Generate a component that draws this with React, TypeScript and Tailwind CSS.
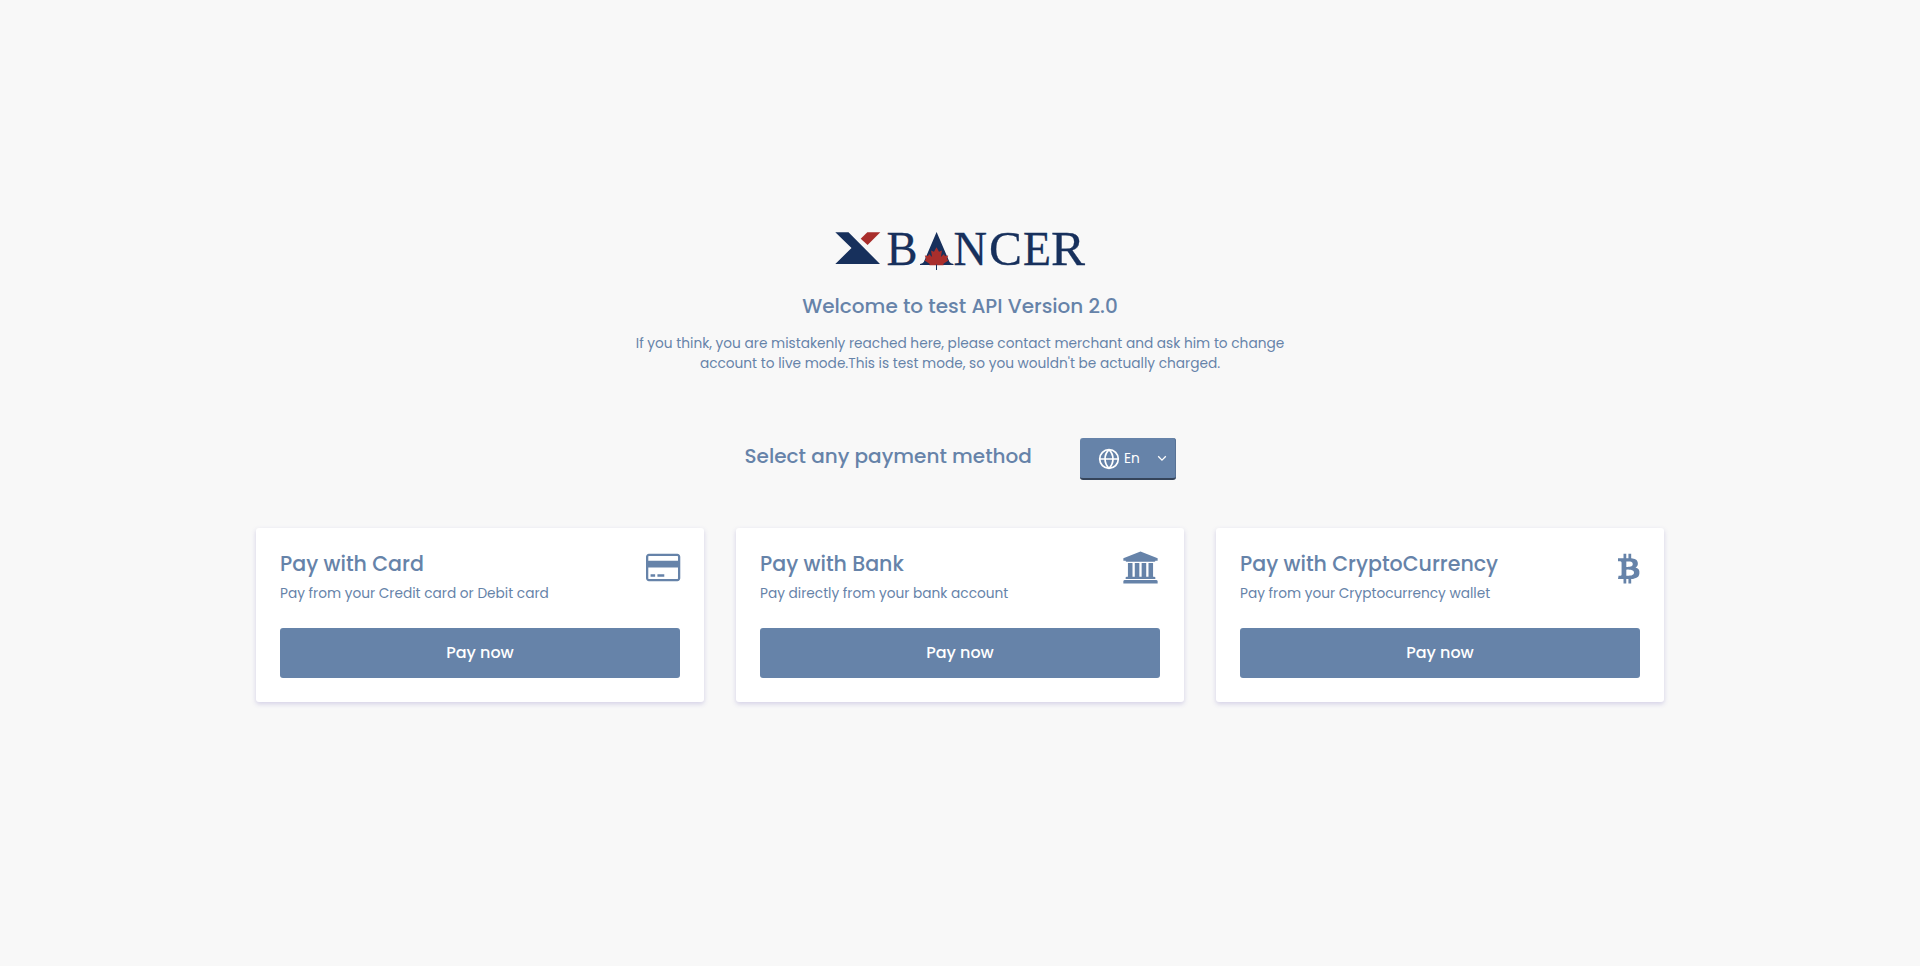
import React from "react";

type Method = { title: string; note: string; viewBox: string; path: string };

const methods: Method[] = [
  {
    title: "Pay with Card",
    note: "Pay from your Credit card or Debit card",
    viewBox: "0 -28 1920 1792",
    path: "M1760 128q66 0 113 47t47 113v1216q0 66-47 113t-113 47h-1600q-66 0-113-47t-47-113v-1216q0-66 47-113t113-47h1600zm-1600 128q-13 0-22.5 9.5t-9.5 22.5v224h1664v-224q0-13-9.5-22.5t-22.5-9.5h-1600zm1600 1280q13 0 22.5-9.5t9.5-22.5v-608h-1664v608q0 13 9.5 22.5t22.5 9.5h1600zm-1504-128v-128h256v128h-256zm384 0v-128h384v128h-384z",
  },
  {
    title: "Pay with Bank",
    note: "Pay directly from your bank account",
    viewBox: "-20 -28 2048 1792",
    path: "M960 0l960 384v128h-128q0 26-20.5 45t-48.5 19h-1526q-28 0-48.5-19t-20.5-45h-128v-128zm-704 640h256v768h128v-768h256v768h128v-768h256v768h128v-768h256v768h59q28 0 48.5 19t20.5 45v64h-1664v-64q0-26 20.5-45t48.5-19h59v-768zm1595 960q28 0 48.5 19t20.5 45v128h-1920v-128q0-26 20.5-45t48.5-19h1782z",
  },
  {
    title: "Pay with CryptoCurrency",
    note: "Pay from your Cryptocurrency wallet",
    viewBox: "0 -28 1280 1792",
    path: "M1167 640q18 182-131 258 117 28 175 103t45 214q-7 71-32.5 125t-64.5 89-97 58.5-121.5 34.5-145.5 15v255h-154v-251q-80 0-122-1v252h-154v-255q-18 0-54-.5t-55-.5h-200l31-183h111q50 0 58-51v-402h16q-6-1-16-1v-287q-13-68-89-68h-111v-164l212 1q64 0 97-1v-252h154v247q82-2 122-2v-245h154v252q79 7 140 22.5t113 45 82.5 78 36.5 114.5zm-215 545q0-36-15-64t-37-46-57.5-30.5-65.5-18.5-74-9-69-3-64.5 1-47.5 1v338q8 0 37 .5t48 .5 53-1.5 58.5-4 57-8.5 55.5-14 47.5-21 39.5-30 24.5-40 9.5-51zm-71-476q0-33-12.5-58.5t-30.5-42-48-28-55-16.5-61.5-8-58-2.5-54 1-39.5.5v307q5 0 34.5.5t46.5 0 50-2 55-5.5 51.5-11 48.5-18.5 37-27 27-38.5 9-51z",
  },
];

function Logo() {
  return (
    <svg width="252" height="64" viewBox="0 -10 252 64" role="img" aria-label="XBancer">
      <path d="M1.300 2.200h13.200L46 34H1.300L17.500 18z" fill="#17305c" />
      <path d="M33.300 2.200H46.300L33.600 15L26.700 8.700z" fill="#a92e2c" />
      <g fill="#17305c" stroke="#17305c" strokeWidth="0.300" fontFamily="'Liberation Serif', serif" fontSize="48">
        <text x="52.500" y="34.500" textLength="31" lengthAdjust="spacingAndGlyphs">B</text>
        <text x="119.500" y="34.500" textLength="33.500" lengthAdjust="spacingAndGlyphs">N</text>
        <text x="155" y="34.500" textLength="33" lengthAdjust="spacingAndGlyphs">C</text>
        <text x="189" y="34.500" textLength="28" lengthAdjust="spacingAndGlyphs">E</text>
        <text x="217" y="34.500" textLength="34" lengthAdjust="spacingAndGlyphs">R</text>
      </g>
      <path d="M102.600 2L115.500 32q1 1.700 4 1.900v1H86v-1q2.800-.2 3.800-1.900z" fill="#17305c" />
      <path
        d="M102.500 17.300l2.500 4.500 3-1.300-1.100 6.500 3.100-3 .9 2.100 3.300-.5-1.300 3.500 1.500 1.300-5.200 3.700.4 1.200h-14.200l.4-1.200-5.200-3.700 1.500-1.300-1.300-3.500 3.300.5.9-2.100 3.100 3-1.100-6.500 3 1.300z"
        fill="#a92e2c"
      />
      <path d="M102 34.500h1v5.500h-1z" fill="#17305c" />
    </svg>
  );
}

function PaymentCard({ method }: { method: Method }) {
  return (
    <article className="h-[174px] rounded-[3px] bg-white p-6 shadow-[0_2px_5px_rgba(80,70,170,0.22)]">
      <div className="flex h-[76px] justify-between">
        <div className="whitespace-nowrap">
          <h2 className="text-[20.57px] leading-6 font-medium">{method.title}</h2>
          <p className="mt-2 text-[13.71px] leading-5">{method.note}</p>
        </div>
        <svg className="-mt-px h-8 w-auto shrink-0" viewBox={method.viewBox} fill="currentColor" overflow="visible">
          <path d={method.path} />
        </svg>
      </div>
      <button className="h-[50px] w-full rounded-[3px] bg-[#6683a9] text-base font-medium text-white">Pay now</button>
    </article>
  );
}

export default function App() {
  return (
    <main className="flex min-h-[966px] flex-col items-center bg-[#f8f8f8] pt-[220px] font-[Poppins,Inter,sans-serif] text-[#6683a9]">
      <Logo />
      <h1 className="mt-1.5 text-[20px] leading-8 font-medium whitespace-nowrap">Welcome to test API Version 2.0</h1>
      <p className="mt-3 text-center text-[13.71px] leading-5 whitespace-nowrap">
        <span>If you think, you are mistakenly reached here, please contact merchant and ask him to change</span>
        <br />
        <span>account to live mode.This is test mode, so you wouldn't be actually charged.</span>
      </p>
      <div className="mt-16 flex w-[432px] justify-between">
        <h2 className="mt-0.5 pl-[0.5px] text-[20px] leading-8 font-medium whitespace-nowrap">Select any payment method</h2>
        <button className="flex h-[42px] w-24 items-center rounded-[3px] border-b-2 border-[#35445a] bg-[#6683a9] pl-[18px] text-[13.71px] text-white shadow-[inset_-1px_0_0_#587295]">
          <svg className="mt-0.5" width="22" height="22" viewBox="0 0 22 22" fill="none" stroke="currentColor" strokeWidth="1.700">
            <circle cx="11" cy="11" r="9.300" />
            <path d="M1.700 11h18.600M11 1.700c-5.300 5.300-5.300 13.300 0 18.600M11 1.700c5.300 5.300 5.300 13.300 0 18.600" />
          </svg>
          <span className="mt-0.5 ml-1">En</span>
          <svg className="ml-auto mr-[9px]" width="10" height="10" viewBox="0 0 10 10" fill="none" stroke="currentColor" strokeWidth="1.300">
            <path d="M1.200 3.300L5 7.100l3.800-3.800" />
          </svg>
        </button>
      </div>
      <section className="mt-[48px] grid w-[1408px] grid-cols-3 gap-8">
        {methods.map((m) => (
          <PaymentCard key={m.title} method={m} />
        ))}
      </section>
    </main>
  );
}
